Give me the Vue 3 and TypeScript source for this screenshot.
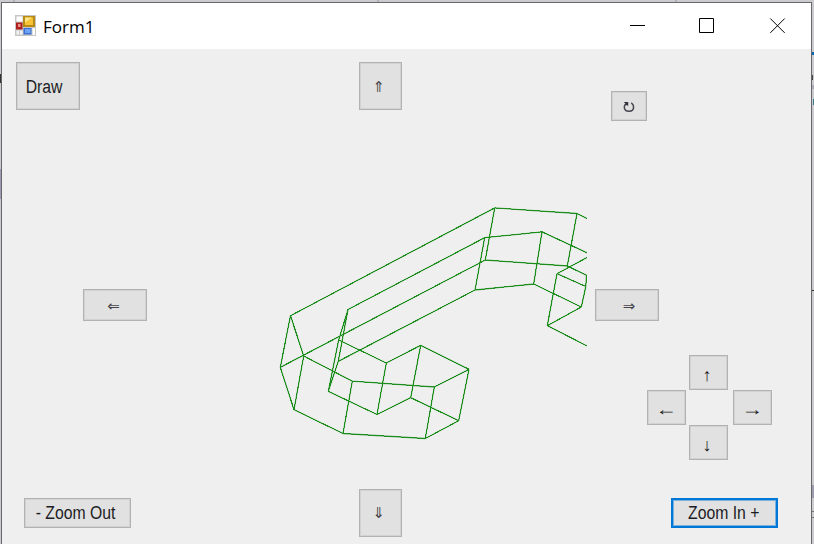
<script setup lang="ts">
type Point = [number, number]

const points: Record<string, Point> = {
  a: [290.5, 315.7], b: [280.3, 367.3], c: [303.7, 356], d: [294, 409.7],
  e: [352.3, 381.2], f: [343, 433.5], g: [434.3, 387], h: [425.3, 438.5],
  i: [469, 369.3], j: [458.7, 420.7], k: [420.7, 345.3], l: [410.7, 397.7],
  m: [386.3, 363], n: [377, 414.5], o: [338.7, 340], p: [328.3, 391.3],
  q: [348, 309.5], r: [338.3, 361.3], s: [494.7, 207.9], t: [485.3, 260],
  u: [484.7, 237.7], v: [475, 290], w: [577, 213.5], x: [567.3, 266],
  y: [542, 231.8], z: [533.7, 284], aa: [557, 273.7], bb: [547.3, 325.7],
  cc: [581.3, 307], dd: [585.8, 286.5], w2: [588, 218.9], x2: [588, 276],
  y2: [588, 253.3], aa2: [588, 257], bb2: [588, 346.4], ee: [586.4, 275.3],
}

const edges: string[] = (
  'a-b a-c c-d b-d c-e e-f d-f e-g f-h g-h g-i h-j i-j i-k j-l k-l k-m l-n m-n ' +
  'm-o n-p o-p o-q q-r p-r a-s b-t q-u r-v s-t s-w t-x w-x u-v u-y v-z y-z ' +
  'w-w2 x-x2 y-y2 z-cc cc-dd dd-ee aa-dd aa-aa2 aa-bb bb-cc bb-bb2'
).split(' ')

const wireframe: string = edges
  .map((edge) => {
    const [from, to] = edge.split('-')
    return `M${points[from].join(' ')}L${points[to].join(' ')}`
  })
  .join('')
</script>

<template>
  <div class="desktop">
    <div class="window">
      <header class="titlebar">
        <svg class="app-icon" viewBox="0 0 21 21">
          <rect width="21" height="21" fill="#c6c6c6" />
          <rect x="1.5" y="1.5" width="6" height="5" fill="#fff" />
          <rect x="1.5" y="15.5" width="6" height="4" fill="#f4f4f4" />
          <path d="M4.5 15.5v4" stroke="#c6c6c6" />
          <rect x="17.5" y="13" width="2.5" height="7" fill="#fff" />
          <rect x="8" y="1" width="12" height="11" fill="#b78b13" />
          <rect x="10" y="2.5" width="8" height="7.5" fill="#f8c435" />
          <path d="M10 2.5h7l-7 5z" fill="#ffe58c" />
          <rect x="1" y="7.5" width="6.5" height="7" fill="#ad1f1c" />
          <rect x="3" y="9" width="2.5" height="3" fill="#ee9288" />
          <rect x="8.5" y="13" width="8" height="6.5" fill="#3e70cf" />
          <rect x="10" y="14" width="5.5" height="4" fill="#6da3f5" />
        </svg>
        <span class="title">Form1</span>
        <svg class="controls" viewBox="0 0 170 20">
          <path d="M5 7.5h15M74.5 .5h14v14h-14z" />
          <path d="M145.3 .5l14.4 14.4M159.700 .5L145.300 14.900" />
        </svg>
      </header>

      <main class="client">
        <div class="row top">
          <button class="btn draw"><span class="label">Draw</span></button>
          <button class="btn tall up"><span class="double">⇑</span></button>
          <button class="btn rotate" aria-label="Rotate">
            <svg class="turn" viewBox="0 0 12 12">
              <path class="arc" d="M2.700 3Q1.300 4.400 1.300 6C1.300 8.800 3.500 10.300 6 10.300S10.600 8.800 10.600 6C10.600 4.200 9.800 2.800 8.200 1.900" />
              <path class="head" d="M.6 1h4.600v4.200L3.900 3.900 2.600 4.600 1.700 3.500 2.500 2.500z" />
            </svg>
          </button>
        </div>

        <div class="row middle">
          <button class="btn wide left"><span class="double">⇐</span></button>
          <svg class="canvas" viewBox="155 195 432 255">
            <path class="soft" :d="wireframe" />
            <path class="crisp" :d="wireframe" />
          </svg>
          <div class="side">
            <button class="btn wide right"><span class="double">⇒</span></button>
            <div class="pad">
              <button class="btn key north"><span class="arrow">↑</span></button>
              <button class="btn key west"><span class="arrow flat">←</span></button>
              <button class="btn key east"><span class="arrow flat">→</span></button>
              <button class="btn key south"><span class="arrow">↓</span></button>
            </div>
          </div>
        </div>

        <div class="row bottom">
          <button class="btn zoom out"><span class="label">- Zoom Out</span></button>
          <button class="btn tall down"><span class="double">⇓</span></button>
          <button class="btn zoom in"><span class="label">Zoom In +</span></button>
        </div>
      </main>
    </div>
  </div>
</template>

<style>
body {
  overflow: hidden;
}
</style>

<style scoped>
.desktop {
  box-sizing: border-box;
  width: 814px;
  height: 544px;
  padding: 2px 2px 0 1px;
  overflow: hidden;
  background:
    linear-gradient(#b0b0bd, #b0b0bd) 13px 0 / 2px 2px no-repeat,
    linear-gradient(#b0b0bd, #b0b0bd) 377px 0 / 2px 2px no-repeat,
    linear-gradient(#b0b0bd, #b0b0bd) 675px 0 / 2px 2px no-repeat,
    linear-gradient(#333, #333) 0 74px / 1px 9px no-repeat,
    linear-gradient(#9b9bb5, #9b9bb5) 0 169px / 1px 30px no-repeat,
    linear-gradient(#0067b0, #0067b0) 812px 52px / 2px 3px no-repeat,
    linear-gradient(#444, #444) 812px 75px / 1px 5px no-repeat,
    linear-gradient(#aaaabb, #aaaabb) 812px 85px / 2px 4px no-repeat,
    linear-gradient(#397b8b, #397b8b) 813px 99px / 1px 6px no-repeat,
    linear-gradient(#333, #333) 812px 290px / 2px 1px no-repeat,
    linear-gradient(#9c9cae, #9c9cae) 812px 485px / 2px 13px no-repeat,
    linear-gradient(#777, #777) 812px 511px / 2px 1px no-repeat,
    linear-gradient(#777, #777) 812px 517px / 2px 1px no-repeat,
    #cbcbcf;
}

.window {
  box-sizing: border-box;
  height: 560px;
  border: 1px solid #68686a;
  background: #efefef;
}

.titlebar {
  display: flex;
  align-items: flex-start;
  height: 46px;
  padding: 0 17px 0 13px;
  background: #fff;
}

.app-icon {
  width: 21px;
  height: 21px;
  margin-top: 12px;
}

.title {
  margin: 11px auto 0 7px;
  font: 17px/26px "Open Sans", sans-serif;
  color: #000;
}

.controls {
  width: 170px;
  height: 20px;
  margin-top: 15px;
  margin-right: -1px;
  fill: none;
  stroke: #000;
  stroke-width: 1;
}

.row {
  display: flex;
  align-items: flex-start;
}

.btn {
  box-sizing: border-box;
  display: flex;
  flex: none;
  align-items: center;
  justify-content: center;
  margin: 0;
  padding: 0;
  border: 1px solid #b2b2b2;
  outline: 1px solid rgb(173 173 173 / 28%);
  outline-offset: -2px;
  background: #e1e1e1;
  color: #1c1c24;
}

.label {
  font: 18px/20px "Liberation Sans", sans-serif;
  white-space: nowrap;
  transform: scaleX(0.875);
}

.double {
  font: 15px/16px "DejaVu Sans", sans-serif;
  color: #45454a;
}

.turn {
  width: 12px;
  height: 12px;
  margin-top: 2px;
}

.arc {
  fill: none;
  stroke: #45454f;
  stroke-width: 1.5;
}

.head {
  fill: #34343c;
}

.arrow {
  font: 18px/20px "Liberation Sans", sans-serif;
}

.flat {
  transform: scaleX(1.2);
}

.top {
  height: 72px;
  padding: 13px 0 0 14px;
  box-sizing: border-box;
}

.draw {
  width: 64px;
  height: 48px;
  padding: 1px 7px 0 0;
}

.tall {
  width: 43px;
  height: 48px;
  padding-right: 4px;
}

.up {
  margin-left: 279px;
  padding-top: 2px;
}

.rotate {
  width: 36px;
  height: 30px;
  margin-top: 29px;
  margin-left: 209px;
}

.middle {
  height: 368px;
}

.wide {
  width: 64px;
  height: 32px;
  padding: 2px 3px 0 0;
}

.left {
  margin: 168px 8px 0 81px;
}

.right {
  padding: 2px 0 0 4px;
}

.canvas {
  flex: none;
  width: 432px;
  height: 255px;
  margin: 74px 8px 0 0;
}

.canvas path {
  fill: none;
  stroke: #008000;
}

.soft {
  stroke-width: 1.3;
  opacity: 0.55;
}

.crisp {
  stroke-width: 1;
  opacity: 0.75;
  shape-rendering: crispEdges;
}

.side {
  padding-top: 168px;
}

.pad {
  display: grid;
  grid-template: 35px 35px 35px / 39px 39px 39px;
  column-gap: 4px;
  margin: 34px 0 0 52px;
}

.key {
  width: 39px;
  height: 35px;
}

.north {
  grid-area: 1 / 2;
  margin-left: -1px;
  padding: 4px 3px 0 0;
}

.west {
  grid-area: 2 / 1;
  padding: 3px 2px 0 0;
}

.east {
  grid-area: 2 / 3;
  padding: 3px 2px 0 0;
}

.south {
  grid-area: 3 / 2;
  margin-left: -1px;
  padding: 4px 3px 0 0;
}

.bottom {
  align-items: center;
  height: 48px;
  padding-left: 22px;
}

.zoom {
  width: 107px;
  height: 30px;
}

.out {
  padding-right: 4px;
}

.down {
  margin-left: 228px;
}

.in {
  margin-left: 269px;
  padding-right: 1px;
  border: 2px solid #0078d7;
  outline: 1px solid rgb(0 120 215 / 45%);
  outline-offset: -3px;
}
</style>
